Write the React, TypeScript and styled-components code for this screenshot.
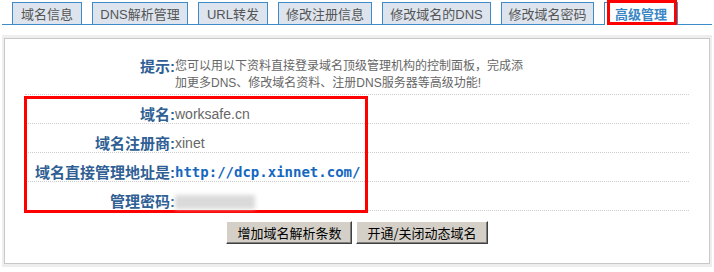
import styled, { createGlobalStyle } from "styled-components";

const GlobalStyle = createGlobalStyle`
  body {
    margin: 0;
    background: #fff;
    font-family: "Liberation Sans", "Noto Sans CJK SC", sans-serif;
  }
`;

const tabs = [
  { label: "域名信息", w: 70 },
  { label: "DNS解析管理", w: 96 },
  { label: "URL转发", w: 70 },
  { label: "修改注册信息", w: 94 },
  { label: "修改域名的DNS", w: 109 },
  { label: "修改域名密码", w: 93 },
  { label: "高级管理", w: 74, active: true },
];

const rows = [
  { label: "域名:", value: "worksafe.cn" },
  { label: "域名注册商:", value: "xinet" },
  { label: "域名直接管理地址是:", value: "http://dcp.xinnet.com/", link: true },
  { label: "管理密码:", value: "", hidden: true },
];

export default function App() {
  return (
    <>
      <GlobalStyle />
      <Page>
        <TabBar>
          {tabs.map((t) => (
            <Tab key={t.label} $w={t.w} $active={!!t.active}>
              {t.label}
              {t.active && <Marker />}
            </Tab>
          ))}
        </TabBar>
        <Panel>
          <PanelInner>
            <InfoTable>
              <HintRow>
                <Label>提示:</Label>
                <HintText>
                  您可以用以下资料直接登录域名顶级管理机构的控制面板，完成添加更多DNS、修改域名资料、注册DNS服务器等高级功能!
                </HintText>
              </HintRow>
              <RowGroup>
                <Highlight />
                {rows.map((r) => (
                  <Row key={r.label}>
                    <Label>{r.label}</Label>
                    {r.hidden ? (
                      <Blurred />
                    ) : (
                      <Value $link={!!r.link}>{r.value}</Value>
                    )}
                  </Row>
                ))}
              </RowGroup>
            </InfoTable>
            <Actions>
              <Button>增加域名解析条数</Button>
              <Button>开通/关闭动态域名</Button>
            </Actions>
          </PanelInner>
        </Panel>
      </Page>
    </>
  );
}

const Page = styled.div`
  padding: 0 2px;
`;

const TabBar = styled.div`
  display: flex;
  align-items: flex-end;
  gap: 10px;
  height: 25px;
  padding: 3px 0 0 10px;
  box-sizing: border-box;
  border-bottom: 1px solid #3d8bc9;
`;

const Tab = styled.div<{ $w: number; $active: boolean }>`
  position: relative;
  display: flex;
  align-items: center;
  justify-content: center;
  box-sizing: border-box;
  width: ${(p) => p.$w}px;
  height: ${(p) => (p.$active ? 23 : 22)}px;
  margin-bottom: ${(p) => (p.$active ? -1 : 0)}px;
  padding-bottom: ${(p) => (p.$active ? 1 : 0)}px;
  border: 1px solid #3d8bc9;
  border-bottom: none;
  background: ${(p) => (p.$active ? "#fff" : "#dde4ee")};
  color: ${(p) => (p.$active ? "#3a86c4" : "#555")};
  font-size: 13px;
  font-weight: ${(p) => (p.$active ? "bold" : "normal")};
  white-space: nowrap;
`;

const Marker = styled.span`
  position: absolute;
  left: 2px;
  right: 0;
  top: -3px;
  bottom: 0;
  border: 3px solid #ff0000;
  pointer-events: none;
`;

const Panel = styled.div`
  margin-top: 10px;
  padding: 3px 2px 3px 2px;
  background: #eeeeee;
  width: 710px;
  box-sizing: border-box;
`;

const PanelInner = styled.div`
  background: #fff;
  border: 1px solid #c8c8c8;
  padding-bottom: 19px;
`;

const InfoTable = styled.div`
  width: 664px;
  margin: 0 auto;
`;

const HintRow = styled.div`
  display: grid;
  grid-template-columns: 150px 350px;
  padding: 19px 0 2px;
  border-bottom: 1px dotted #cccccc;
  line-height: 17px;
`;

const Label = styled.div`
  text-align: right;
  color: #2f5f94;
  font-size: 15px;
  font-weight: bold;
  line-height: 17px;
  white-space: nowrap;
`;

const HintText = styled.div`
  color: #666;
  font-size: 12px;
  line-height: 17px;
`;

const RowGroup = styled.div`
  position: relative;
`;

const Highlight = styled.div`
  position: absolute;
  left: -1px;
  top: 1px;
  width: 344px;
  height: 117px;
  border: 3px solid #ff0000;
  box-sizing: border-box;
  pointer-events: none;
`;

const Row = styled.div`
  display: grid;
  grid-template-columns: 150px 1fr;
  align-items: end;
  height: 29px;
  box-sizing: border-box;
  padding-bottom: 0;
  border-bottom: 1px dotted #cccccc;
`;

const Value = styled.div<{ $link: boolean }>`
  color: ${(p) => (p.$link ? "#1467c0" : "#666")};
  font-family: ${(p) =>
    p.$link ? `"DejaVu Sans Mono", monospace` : `"Liberation Sans", sans-serif`};
  font-size: 14px;
  font-weight: ${(p) => (p.$link ? "bold" : "normal")};
  line-height: 17px;
  white-space: nowrap;
`;

const Blurred = styled.div`
  width: 80px;
  height: 14px;
  margin-bottom: 1px;
  background: #dadada;
  filter: blur(2px);
`;

const Actions = styled.div`
  display: flex;
  justify-content: center;
  gap: 4px;
  margin-top: 10px;
`;

const Button = styled.button`
  height: 23px;
  padding: 0 10px;
  background: #d4d0c8;
  color: #000;
  font-family: "Noto Sans CJK SC", sans-serif;
  font-size: 13px;
  border-top: 1px solid #ffffff;
  border-left: 1px solid #ffffff;
  border-right: 1px solid #404040;
  border-bottom: 1px solid #404040;
  box-shadow: inset -1px -1px 0 #808080;
  border-radius: 0;
`;
